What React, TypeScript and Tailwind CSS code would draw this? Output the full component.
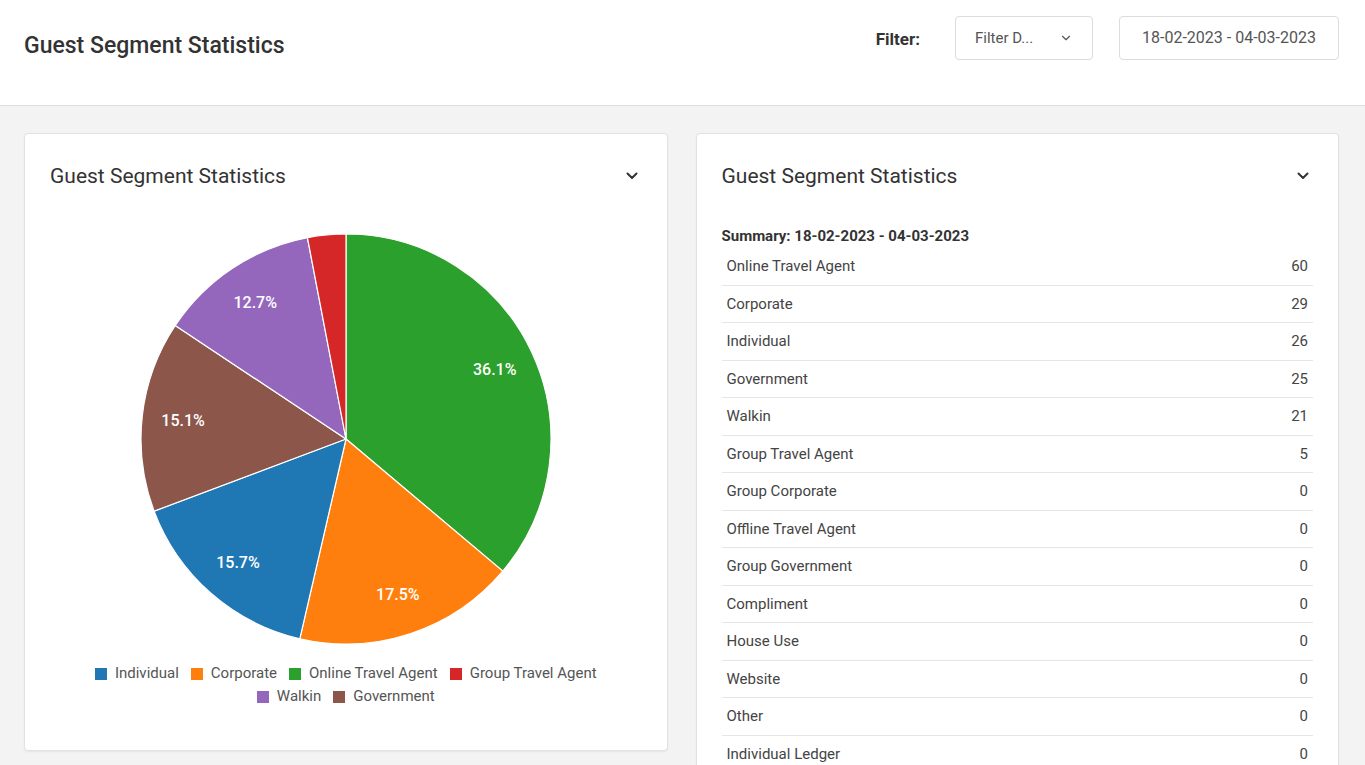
import { ChevronDown } from "lucide-react";

interface Segment {
    name: string;
    count: number;
    color: string;
}

// pie order as drawn (clockwise from the top)
const pieData: Segment[] = [
    { name: "Online Travel Agent", count: 60, color: "#2ca02c" },
    { name: "Corporate", count: 29, color: "#ff7f0e" },
    { name: "Individual", count: 26, color: "#1f77b4" },
    { name: "Government", count: 25, color: "#8c564b" },
    { name: "Walkin", count: 21, color: "#9467bd" },
    { name: "Group Travel Agent", count: 5, color: "#d62728" },
];

const legendRows = [
    [
        { name: "Individual", color: "#1f77b4" },
        { name: "Corporate", color: "#ff7f0e" },
        { name: "Online Travel Agent", color: "#2ca02c" },
        { name: "Group Travel Agent", color: "#d62728" },
    ],
    [
        { name: "Walkin", color: "#9467bd" },
        { name: "Government", color: "#8c564b" },
    ],
];

const summary = [
    ["Online Travel Agent", 60],
    ["Corporate", 29],
    ["Individual", 26],
    ["Government", 25],
    ["Walkin", 21],
    ["Group Travel Agent", 5],
    ["Group Corporate", 0],
    ["Offline Travel Agent", 0],
    ["Group Government", 0],
    ["Compliment", 0],
    ["House Use", 0],
    ["Website", 0],
    ["Other", 0],
    ["Individual Ledger", 0],
] as const;

const font = { fontFamily: "Roboto, 'Liberation Sans', sans-serif" };

const SmallChevron = () => (
    <svg width="12" height="8" viewBox="0 0 12 8" fill="none">
        <path d="M1.5 1.5 L6 6 L10.5 1.5" stroke="#333" strokeWidth="2" strokeLinecap="round" strokeLinejoin="round" />
    </svg>
);

const Pie = () => {
    const cx = 210;
    const cy = 210;
    const r = 205;
    const total = pieData.reduce((s, d) => s + d.count, 0);
    let start = 0;
    const pt = (a: number, rad: number) => [cx + rad * Math.sin(a), cy - rad * Math.cos(a)];

    return (
        <svg width="420" height="420" viewBox="0 0 420 420">
            {pieData.map((d) => {
                const frac = d.count / total;
                const a0 = start * Math.PI * 2;
                const a1 = (start + frac) * Math.PI * 2;
                start += frac;
                const [x0, y0] = pt(a0, r);
                const [x1, y1] = pt(a1, r);
                const large = frac > 0.5 ? 1 : 0;
                const mid = (a0 + a1) / 2;
                const [lx, ly] = pt(mid, r * 0.8);
                return (
                    <g key={d.name}>
                        <path
                            d={`M${cx} ${cy} L${x0} ${y0} A${r} ${r} 0 ${large} 1 ${x1} ${y1} Z`}
                            fill={d.color}
                            stroke="#fff"
                            strokeWidth="1.2"
                        />
                        {frac > 0.05 && (
                            <text
                                x={lx}
                                y={ly}
                                fill="#fff"
                                fontSize="16"
                                fontWeight="500"
                                textAnchor="middle"
                                dominantBaseline="central"
                                style={font}
                            >
                                {(frac * 100).toFixed(1)}%
                            </text>
                        )}
                    </g>
                );
            })}
        </svg>
    );
};

const CardHeader = () => (
    <div className="flex items-center justify-between pt-[30px] pl-[25px] pr-[29px]">
        <h3 className="text-[21px] leading-6 text-[#333]">Guest Segment Statistics</h3>
        <SmallChevron />
    </div>
);

export default function App() {
    return (
        <div className="min-h-screen bg-[#f3f3f3]" style={font}>
            <header className="flex h-[106px] justify-between border-b border-[#dedede] bg-white pl-6 pr-[26px]">
                <h1 className="pt-[32px] text-[23px] leading-7 font-medium text-[#333]">Guest Segment Statistics</h1>
                <div className="flex items-start pt-4">
                    <span className="mt-[11px] mr-[35px] text-[17px] leading-6 font-bold text-[#333]">Filter:</span>
                    <button className="flex h-[44px] w-[138px] items-center justify-between rounded border border-[#dcdcdc] bg-white pl-[19px] pr-[19px] text-[15px] text-[#555]">
                        <span>Filter D...</span>
                        <ChevronDown size={14} strokeWidth={2} className="text-[#555]" />
                    </button>
                    <div className="ml-[26px] flex h-[44px] w-[220px] items-center justify-center rounded border border-[#dcdcdc] bg-white text-[16px] text-[#555]">
                        18-02-2023 - 04-03-2023
                    </div>
                </div>
            </header>

            <main className="grid grid-cols-2 gap-7 pl-6 pr-[26px] pt-[27px] pb-6">
                <section className="h-[618px] rounded border border-[#e2e2e2] bg-white shadow-[0_1px_2px_rgba(0,0,0,0.06)]">
                    <CardHeader />
                    <div className="mt-[41px] flex justify-center">
                        <Pie />
                    </div>
                    <div className="mt-[13px] flex flex-col items-center text-[15px] leading-[23px] text-[#555]">
                        {legendRows.map((row, i) => (
                            <div key={i} className="flex items-center gap-[12px]">
                                {row.map((l) => (
                                    <span key={l.name} className="flex items-center gap-2">
                                        <span className="inline-block h-3 w-3" style={{ backgroundColor: l.color }} />
                                        {l.name}
                                    </span>
                                ))}
                            </div>
                        ))}
                    </div>
                </section>

                <section className="rounded border border-[#e2e2e2] bg-white pb-4 shadow-[0_1px_2px_rgba(0,0,0,0.06)]">
                    <CardHeader />
                    <div className="px-[25px] pt-[38px]">
                        <div className="text-[15px] leading-5 font-bold text-[#333]">Summary: 18-02-2023 - 04-03-2023</div>
                        <div className="mt-[2px]">
                            {summary.map(([name, val]) => (
                                <div
                                    key={name}
                                    className="flex h-[37.5px] items-center justify-between border-b border-[#e6e6e6] px-[5px] text-[15px] text-[#444]"
                                >
                                    <span>{name}</span>
                                    <span>{val}</span>
                                </div>
                            ))}
                        </div>
                    </div>
                </section>
            </main>
        </div>
    );
}
